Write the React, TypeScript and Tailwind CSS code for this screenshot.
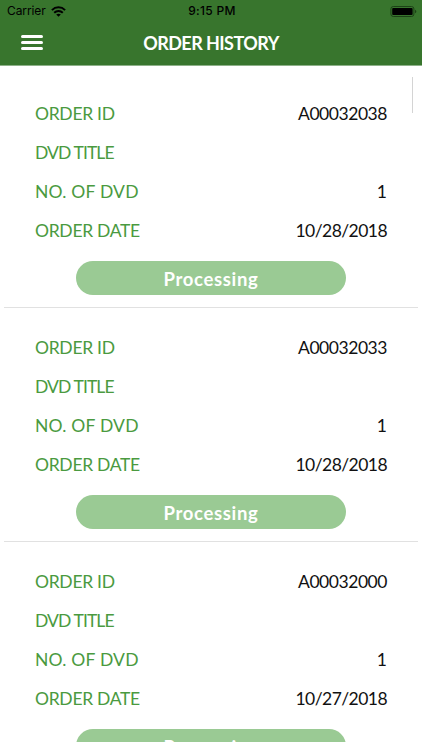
interface Order {
  id: string;
  title: string;
  count: number;
  date: string;
  status: string;
}

const orders: Order[] = [
  { id: 'A00032038', title: '', count: 1, date: '10/28/2018', status: 'Processing' },
  { id: 'A00032033', title: '', count: 1, date: '10/28/2018', status: 'Processing' },
  { id: 'A00032000', title: '', count: 1, date: '10/27/2018', status: 'Processing' },
];

interface RowProps {
  label: string;
  value: string | number;
  labelClass: string;
  valueClass?: string;
}

function Row({ label, value, labelClass, valueClass = '' }: RowProps) {
  return (
    <div className="flex h-[39px] items-center justify-between px-[35px] pt-[2px] text-[17.5px] leading-none">
      <span className={`text-[#4a9a40] ${labelClass}`}>{label}</span>
      <span className={`text-[#111] ${valueClass}`}>{value}</span>
    </div>
  );
}

function StatusBar() {
  return (
    <div className="grid h-[22px] grid-cols-3 items-center pl-[7px] pr-[5px] font-[Inter,sans-serif] text-[12px] leading-none text-black">
      <div className="flex items-center gap-[5px]">
        <span className="tracking-[-0.1px]">Carrier</span>
        <svg className="h-[11px] w-[15px]" viewBox="0 0 15 11" fill="none" stroke="currentColor" strokeWidth="2">
          <path d="M0.9 4.1C4.6 0.4 10.4 0.4 14.1 4.1" />
          <path d="M3.2 6.8C5.6 4.4 9.4 4.4 11.8 6.8" />
          <path d="M7.5 10.8L5.2 8.6C6.5 7.4 8.5 7.4 9.8 8.6Z" fill="currentColor" stroke="none" />
        </svg>
      </div>
      <span className="text-center font-medium tracking-[0.3px]">9:15 PM</span>
      <svg className="h-[11px] w-[27px] justify-self-end" viewBox="0 0 27 11">
        <rect x="0.9" y="0.5" width="23" height="10" rx="2.4" fill="none" stroke="#1c4216" strokeWidth="1" />
        <rect x="2.2" y="1.9" width="20.4" height="7.2" rx="1" fill="#000" />
        <path d="M25 3.8C26.8 4.2 26.8 6.8 25 7.2Z" fill="#1c4216" />
      </svg>
    </div>
  );
}

export default function App() {
  return (
    <div className="relative flex h-[750px] w-[422px] flex-col overflow-hidden bg-white font-[Lato,sans-serif]">
      <header className="h-[66px] shrink-0 border-b border-[#8db088] bg-[#38752d]">
        <StatusBar />
        <div className="grid h-[41px] grid-cols-[1fr_auto_1fr] items-center">
          <button aria-label="Menu" className="ml-[21px] flex w-[22px] flex-col gap-[3px]">
            <span className="h-[3px] rounded-full bg-white" />
            <span className="h-[3px] rounded-full bg-white" />
            <span className="h-[3px] rounded-full bg-white" />
          </button>
          <h1 className="text-[18px] font-bold leading-none tracking-[-0.55px] text-white">ORDER HISTORY</h1>
        </div>
      </header>

      <main className="mb-[8px] min-h-0 flex-1 overflow-hidden pt-2">
        {orders.map((order) => (
          <section key={order.id} className="mx-1 border-b border-[#e1e1e1] pb-3 pt-[19px]">
            <div className="-mx-1">
              <Row label="ORDER ID" value={order.id} labelClass="tracking-[-0.3px]" valueClass="tracking-[-0.45px]" />
              <Row label="DVD TITLE" value={order.title} labelClass="tracking-[-0.9px]" />
              <Row label="NO. OF DVD" value={order.count} labelClass="tracking-[0.2px]" />
              <Row label="ORDER DATE" value={order.date} labelClass="tracking-[-0.3px]" valueClass="tracking-[-0.55px]" />
              <button className="ml-[76px] mt-3 flex h-[34px] w-[270px] items-center justify-center rounded-full bg-[#9aca94] pt-[2px] text-[18.5px] font-bold leading-none tracking-[0.65px] text-white">
                {order.status}
              </button>
            </div>
          </section>
        ))}
      </main>

      {/* scroll indicator */}
      <div className="absolute left-[412px] top-[77px] h-[36px] w-px bg-[#d4d4d4]" />
    </div>
  );
}
